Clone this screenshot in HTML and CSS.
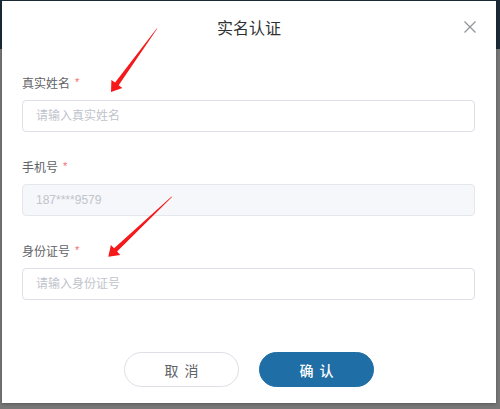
FILE: index.html
```html
<!DOCTYPE html>
<html lang="zh-CN">
<head>
<meta charset="utf-8">
<title>实名认证</title>
<link rel="stylesheet" href="styles.css">
</head>
<body>
<div class="modal">
  <div class="modal-header">
    <span></span>
    <h2 class="modal-title">实名认证</h2>
    <button class="close" aria-label="关闭">
      <svg viewBox="0 0 12 12" width="12" height="12"><path d="M0.5 0.5 L11.5 11.5 M11.5 0.5 L0.5 11.5" stroke="#909399" stroke-width="1.2" fill="none"/></svg>
    </button>
  </div>
  <form class="form">
    <div class="item">
      <label class="label">真实姓名<span class="req">*</span></label>
      <input class="input" type="text" placeholder="请输入真实姓名">
    </div>
    <div class="item">
      <label class="label">手机号<span class="req">*</span></label>
      <input class="input disabled" type="text" value="187****9579" disabled>
    </div>
    <div class="item">
      <label class="label">身份证号<span class="req">*</span></label>
      <input class="input" type="text" placeholder="请输入身份证号">
    </div>
  </form>
  <div class="footer">
    <button class="btn btn-cancel" type="button">取 消</button>
    <button class="btn btn-ok" type="button">确 认</button>
  </div>
</div>
<svg class="arrows" viewBox="0 0 500 409" width="500" height="409">
  <polygon fill="#f5191b" points="157.3,28.6 118.7,85.2 122.4,88.0 111,92 111.4,79.9 115.1,82.6 156.7,28.4"/>
  <polygon fill="#f5191b" points="172,196.9 117.1,251.5 120.3,255.0 108.3,256.7 110.9,244.9 114.1,248.3 171.6,196.6"/>
</svg>
</body>
</html>
```
FILE: styles.css
```css
* { box-sizing: border-box; }
html, body { margin: 0; padding: 0; }
body {
  width: 500px;
  height: 409px;
  overflow: hidden;
  position: relative;
  background: linear-gradient(to bottom, #1c2a37 0, #1c2a37 49px, #777777 49px, #777777 100%);
  font-family: "Noto Sans CJK SC", "Liberation Sans", sans-serif;
}
.modal {
  margin: 1px 0 0 2px;
  width: 494px;
  height: 402px;
  background: #ffffff;
  display: flex;
  flex-direction: column;
  box-shadow: 0 1px 3px rgba(0,0,0,0.25);
}
.modal-header {
  height: 54px;
  flex: none;
  display: grid;
  grid-template-columns: 1fr auto 1fr;
  align-items: center;
}
.modal-title {
  margin: 0 0 3px 0;
  font-size: 16px;
  font-weight: 400;
  color: #303133;
  line-height: 20px;
}
.close {
  justify-self: end;
  margin: 0 20px 2px 0;
  padding: 0;
  border: 0;
  background: none;
  width: 12px;
  height: 12px;
  display: flex;
}
.form {
  padding: 18px 21px 0 20px;
  margin: 0;
}
.item { margin-bottom: 25px; display: flex; flex-direction: column; }
.item:last-child { margin-bottom: 0; }
.label {
  display: block;
  height: 20px;
  font-size: 12px;
  line-height: 20px;
  color: #606266;
  margin-bottom: 7px;
  overflow: visible;
}
.req {
  color: #f56c6c;
  margin-left: 5px;
  font-family: "Liberation Sans", sans-serif;
  font-size: 11px;
  line-height: 1;
  vertical-align: top;
  position: relative;
  top: 4px;
}
.input {
  display: block;
  margin: 0;
  width: 100%;
  height: 32px;
  border: 1px solid #dcdfe6;
  border-radius: 4px;
  padding: 0 13px;
  font-family: "Liberation Sans", "Noto Sans CJK SC", sans-serif;
  font-size: 12px;
  color: #606266;
  background: #ffffff;
  outline: none;
}
.input::placeholder { color: #c0c4cc; }
.input.disabled {
  background: #f5f7fa;
  border-color: #e4e7ed;
  color: #c0c4cc;
  -webkit-text-fill-color: #c0c4cc;
  opacity: 1;
}
.footer {
  margin-top: 52px;
  display: flex;
  justify-content: center;
  gap: 20px;
}
.btn {
  width: 115px;
  height: 35px;
  border-radius: 18px;
  font-family: "Noto Sans CJK SC", sans-serif;
  font-size: 14px;
  word-spacing: 3px;
  padding: 0;
  cursor: pointer;
}
.btn-cancel {
  background: #ffffff;
  border: 1px solid #dcdfe6;
  color: #606266;
}
.btn-ok {
  background: #1f6ea5;
  border: 1px solid #1f6ea5;
  color: #ffffff;
  font-weight: 500;
}
.arrows {
  position: absolute;
  top: 0;
  left: 0;
  pointer-events: none;
}
```
